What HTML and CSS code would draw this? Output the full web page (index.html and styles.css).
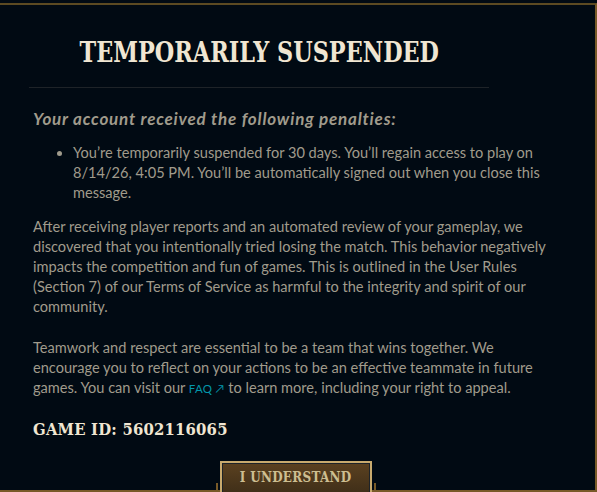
FILE: index.html
```html
<!DOCTYPE html>
<html lang="en">
<head>
  <meta charset="UTF-8">
  <title>Temporarily Suspended</title>
  <link rel="stylesheet" href="styles.css">
</head>
<body>
  <div class="modal">
    <div class="modal-header">
      <h1><span class="title-text">Temporarily Suspended</span></h1>
    </div>
    <div class="modal-body">
      <h2>Your account received the following penalties:</h2>
      <ul class="penalties">
        <li>You’re temporarily suspended for 30 days. You’ll regain access to play on 8/14/26, 4:05 PM. You’ll be automatically signed out when you close this message.</li>
      </ul>
      <p>After receiving player reports and an automated review of your gameplay, we discovered that you intentionally tried losing the match. This behavior negatively impacts the competition and fun of games. This is outlined in the User Rules (Section 7) of our Terms of Service as harmful to the integrity and spirit of our community.</p>
      <p>Teamwork and respect are essential to be a team that wins together. We encourage you to reflect on your actions to be an effective teammate in future games. You can visit our <a class="faq" href="#">FAQ&nbsp;↗</a> to learn more, including your right to appeal.</p>
      <h3 class="game-id">Game ID: 5602116065</h3>
    </div>
    <div class="modal-footer">
      <button class="btn-understand"><span class="btn-label">I Understand</span></button>
    </div>
  </div>
</body>
</html>
```

FILE: styles.css
```css
html, body {
  margin: 0;
  padding: 0;
  background: #010a13;
  overflow: hidden;
}
.modal {
  position: relative;
  box-sizing: border-box;
  height: 489px;
  margin-top: 3px;
  background: #010a13;
  border-top: 2px solid #5c4a22;
  border-right: 2px solid #785a28;
  border-bottom: 2px solid #785a28;
  font-family: Lato, "Noto Sans", sans-serif;
  color: #a09b8c;
}
.modal-header {
  width: 460px;
  margin: 0 0 0 29px;
  padding-top: 31px;
  padding-bottom: 17px;
  border-bottom: 1px solid #1e2328;
  text-align: center;
}
.modal-header h1 {
  margin: 0;
  font-family: "DejaVu Serif Condensed", "DejaVu Serif", serif;
  font-weight: 700;
  font-size: 27px;
  line-height: 34px;
  letter-spacing: 0;
  text-transform: uppercase;
  color: #f0e6d2;
}
.title-text {
  display: inline-block;
  transform: scaleX(0.92);
}
.modal-body {
  padding: 0 40px 0 33px;
}
.modal-body h2 {
  margin: 19px 0 12px;
  font-size: 17px;
  line-height: 24px;
  font-weight: 700;
  font-style: italic;
  letter-spacing: 0.8px;
  color: #a09b8c;
}
.penalties {
  margin: 0;
  padding-left: 40px;
  font-size: 14.6px;
  line-height: 20px;
}
.modal-body p {
  margin: 14px 0 0;
  font-size: 14.6px;
  line-height: 20px;
}
.modal-body p + p {
  margin-top: 21px;
}
.faq {
  color: #0397ab;
  text-decoration: none;
  font-size: 11.5px;
  letter-spacing: 0.3px;
}
.game-id {
  margin: 19px 0 0;
  font-family: "DejaVu Serif Condensed", "DejaVu Serif", serif;
  font-size: 16.5px;
  line-height: 24px;
  font-weight: 700;
  letter-spacing: 0.2px;
  text-transform: uppercase;
  color: #f0e6d2;
}
.modal-footer {
  position: absolute;
  left: 220px;
  top: 456px;
}
.btn-understand {
  position: relative;
  width: 152px;
  height: 40px;
  padding: 0 0 8px;
  box-sizing: border-box;
  vertical-align: top;
  text-align: center;
  border: 2px solid #c8aa6e;
  outline: 1px solid #1e2328;
  outline-offset: -3px;
  border-radius: 0;
  background: linear-gradient(#5b4120, #3a2b17);
  font-family: "DejaVu Serif Condensed", "DejaVu Serif", serif;
  font-weight: 700;
  font-size: 14.5px;
  line-height: 20px;
  letter-spacing: 0.3px;
  text-transform: uppercase;
  color: #cdbe91;
  cursor: pointer;
}
.btn-label {
  display: inline-block;
  transform: scaleX(0.92);
}
.btn-understand::before,
.btn-understand::after {
  content: "";
  position: absolute;
  top: 20px;
  width: 2px;
  height: 14px;
  background: #785a28;
}
.btn-understand::before {
  left: -6px;
}
.btn-understand::after {
  right: -6px;
}
```
